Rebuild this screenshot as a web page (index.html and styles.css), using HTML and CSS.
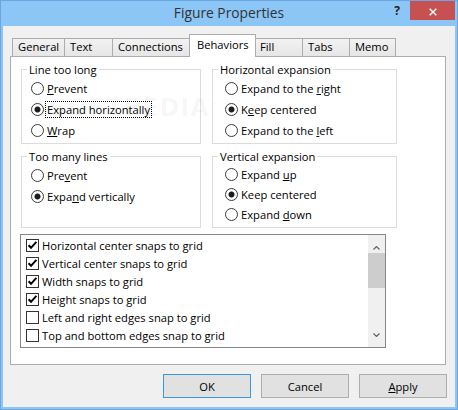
FILE: index.html
```html
<!DOCTYPE html>
<html lang="en">
<head>
<meta charset="utf-8">
<title>Figure Properties</title>
<link rel="stylesheet" href="styles.css">
</head>
<body>
<div class="window">
  <header class="titlebar">
    <div class="title">Figure Properties</div>
    <div class="caption-buttons">
      <div class="caption-btn help">?</div>
      <div class="caption-btn close"><svg width="8" height="8" viewBox="0 0 8 8"><path d="M0.7 0.7 L7.3 7.3 M7.3 0.7 L0.7 7.3" stroke="#fff" stroke-width="1.4" fill="none"/></svg></div>
    </div>
  </header>
  <main class="client">
    <nav class="tabs">
      <div class="tab tab-general">General</div>
      <div class="tab tab-text">Text</div>
      <div class="tab tab-connections">Connections</div>
      <div class="tab tab-behaviors active">Behaviors</div>
      <div class="tab tab-fill">Fill</div>
      <div class="tab tab-tabs">Tabs</div>
      <div class="tab tab-memo">Memo</div>
    </nav>
    <section class="panel">
      <div class="watermark">SOFTPEDIA<sup>®</sup></div>
      <div class="groups">
        <fieldset class="group group-left">
          <legend>Line too long</legend>
          <div class="options">
            <div class="option"><span class="radio"></span><span class="label"><u>P</u>revent</span></div>
            <div class="option"><span class="radio checked"></span><span class="label focus">Expand horizontally</span></div>
            <div class="option"><span class="radio"></span><span class="label"><u>W</u>rap</span></div>
          </div>
        </fieldset>
        <fieldset class="group group-right">
          <legend>Horizontal expansion</legend>
          <div class="options">
            <div class="option"><span class="radio"></span><span class="label">Expand to the <u>r</u>ight</span></div>
            <div class="option"><span class="radio checked"></span><span class="label">K<u>e</u>ep centered</span></div>
            <div class="option"><span class="radio"></span><span class="label">Expand to the <u>l</u>eft</span></div>
          </div>
        </fieldset>
        <fieldset class="group group-left">
          <legend>Too many lines</legend>
          <div class="options">
            <div class="option"><span class="radio"></span><span class="label">Pre<u>v</u>ent</span></div>
            <div class="option"><span class="radio checked"></span><span class="label">Expa<u>n</u>d vertically</span></div>
          </div>
        </fieldset>
        <fieldset class="group group-right">
          <legend>Vertical expansion</legend>
          <div class="options options-tight">
            <div class="option"><span class="radio"></span><span class="label">Expand <u>u</u>p</span></div>
            <div class="option"><span class="radio checked"></span><span class="label">Keep centered</span></div>
            <div class="option"><span class="radio"></span><span class="label">Expand <u>d</u>own</span></div>
          </div>
        </fieldset>
      </div>
      <div class="listbox">
        <div class="items">
          <div class="item"><svg class="cb" width="13" height="13" viewBox="0 0 13 13"><rect x="0.5" y="0.5" width="12" height="12" fill="#fff" stroke="#333"/><path d="M2.6 6.2 L5 8.8 L10.4 2.8" fill="none" stroke="#000" stroke-width="2"/></svg><span>Horizontal center snaps to grid</span></div>
          <div class="item"><svg class="cb" width="13" height="13" viewBox="0 0 13 13"><rect x="0.5" y="0.5" width="12" height="12" fill="#fff" stroke="#333"/><path d="M2.6 6.2 L5 8.8 L10.4 2.8" fill="none" stroke="#000" stroke-width="2"/></svg><span>Vertical center snaps to grid</span></div>
          <div class="item"><svg class="cb" width="13" height="13" viewBox="0 0 13 13"><rect x="0.5" y="0.5" width="12" height="12" fill="#fff" stroke="#333"/><path d="M2.6 6.2 L5 8.8 L10.4 2.8" fill="none" stroke="#000" stroke-width="2"/></svg><span>Width snaps to grid</span></div>
          <div class="item"><svg class="cb" width="13" height="13" viewBox="0 0 13 13"><rect x="0.5" y="0.5" width="12" height="12" fill="#fff" stroke="#333"/><path d="M2.6 6.2 L5 8.8 L10.4 2.8" fill="none" stroke="#000" stroke-width="2"/></svg><span>Height snaps to grid</span></div>
          <div class="item"><svg class="cb" width="13" height="13" viewBox="0 0 13 13"><rect x="0.5" y="0.5" width="12" height="12" fill="#fff" stroke="#333"/></svg><span>Left and right edges snap to grid</span></div>
          <div class="item"><svg class="cb" width="13" height="13" viewBox="0 0 13 13"><rect x="0.5" y="0.5" width="12" height="12" fill="#fff" stroke="#333"/></svg><span>Top and bottom edges snap to grid</span></div>
        </div>
        <div class="scrollbar">
          <div class="sb-btn sb-up"><svg width="7" height="4" viewBox="0 0 7 4"><path d="M0.5 3.5 L3.5 0.6 L6.5 3.5" fill="none" stroke="#606060" stroke-width="1.2"/></svg></div>
          <div class="sb-thumb"></div>
          <div class="sb-track"></div>
          <div class="sb-btn sb-down"><svg width="7" height="4" viewBox="0 0 7 4"><path d="M0.5 0.5 L3.5 3.4 L6.5 0.5" fill="none" stroke="#606060" stroke-width="1.2"/></svg></div>
        </div>
      </div>
    </section>
    <footer class="buttons">
      <button class="btn btn-default">OK</button>
      <button class="btn">Cancel</button>
      <button class="btn"><u>A</u>pply</button>
    </footer>
  </main>
</div>
</body>
</html>
```

FILE: styles.css
```css
* { box-sizing: border-box; }
html, body { margin: 0; padding: 0; }
body {
  width: 458px;
  height: 410px;
  overflow: hidden;
  font-family: "Open Sans", "Noto Sans", sans-serif;
  font-size: 11.2px;
  color: #000;
}
.window {
  width: 458px;
  height: 410px;
  background: #8bc6f6;
  border: 1px solid #68a8e2;
  padding: 0 2px 2px;
  display: flex;
  flex-direction: column;
}
.titlebar {
  height: 25px;
  flex: none;
  display: grid;
  grid-template-columns: 1fr auto 1fr;
  align-items: start;
}
.title {
  grid-column: 2;
  font-size: 13.8px;
  line-height: 23px;
  color: #333;
}
.caption-buttons {
  grid-column: 3;
  justify-self: end;
  display: flex;
}
.caption-btn {
  height: 19px;
  display: flex;
  align-items: center;
  justify-content: center;
}
.help {
  width: 26px;
  font-weight: 700;
  font-size: 12px;
  color: #222;
}
.close {
  width: 45px;
  background: #c75050;
}
.close svg { margin-top: 2px; }

.client {
  flex: 1;
  background: #f0f0f0;
  display: flex;
  flex-direction: column;
}
.tabs {
  height: 30px;
  flex: none;
  display: flex;
  align-items: flex-end;
  padding-left: 9px;
}
.tab {
  height: 18px;
  border: 1px solid #acacac;
  border-right: none;
  border-bottom: none;
  background: linear-gradient(#f2f2f2, #e6e6e6);
  padding-left: 5px;
  line-height: 16px;
  white-space: nowrap;
  flex: none;
}
.tab-general { width: 52px; }
.tab-text { width: 48px; }
.tab-connections { width: 79px; }
.tab-fill { width: 48px; }
.tab-tabs { width: 47px; }
.tab-memo { width: 47px; border-right: 1px solid #acacac; }
.tab.active {
  width: 67px;
  height: 23px;
  margin: 0 -2px -1px;
  background: #fff;
  border-right: 1px solid #acacac;
  padding-left: 7px;
  line-height: 20px;
  z-index: 1;
}

.panel {
  position: relative;
  flex: none;
  margin-left: 7px;
  width: 436px;
  height: 309px;
  background: #fff;
  border: 1px solid #acacac;
  padding: 5px 0 0 10px;
}
.watermark {
  position: absolute;
  left: 38px;
  top: 40px;
  font-family: "DejaVu Sans", sans-serif;
  font-weight: 700;
  font-size: 24px;
  line-height: 22px;
  letter-spacing: 1px;
  color: rgba(0, 0, 0, 0.045);
  pointer-events: none;
}
.watermark sup { font-size: 9px; line-height: 0; }
.groups {
  display: grid;
  grid-template-columns: 180px 185px;
  grid-template-rows: 82px 79px;
  column-gap: 11px;
  row-gap: 5px;
}
.group {
  margin: 0;
  padding: 0;
  min-width: 0;
  border: 1px solid #dcdcdc;
}
.group legend {
  margin-left: 5px;
  padding: 0 2px;
  line-height: 15px;
}
.options { padding-top: 1px; }
.group-left .options { padding-left: 9px; }
.group-right .options { padding-left: 12px; }
.option {
  display: flex;
  align-items: center;
  height: 21px;
  white-space: nowrap;
}
.options-tight { padding-top: 0; }
.options-tight .option { height: 20px; }
.radio {
  flex: none;
  width: 13px;
  height: 13px;
  border: 1px solid #3a3a3a;
  border-radius: 50%;
  background: #fff;
  margin-right: 1px;
}
.radio.checked {
  background: radial-gradient(circle, #1c1c1c 0 2.6px, #fff 3.4px);
}
.label {
  border: 1px dotted transparent;
  padding: 0 1px;
  line-height: 15px;
}
.label.focus { border-color: #000; }

.listbox {
  display: flex;
  width: 366px;
  height: 114px;
  margin: 6px 0 0 -1px;
  border: 1px solid #828790;
  background: #fff;
}
.items {
  flex: 1;
  padding: 1px 0 0 5px;
  overflow: hidden;
}
.item {
  display: flex;
  align-items: center;
  gap: 3px;
  height: 18px;
  white-space: nowrap;
}
.cb { flex: none; display: block; }
.scrollbar {
  flex: none;
  width: 17px;
  display: flex;
  flex-direction: column;
  background: #f0f0f0;
}
.sb-btn {
  flex: none;
  display: flex;
  justify-content: center;
}
.sb-btn svg { display: block; }
.sb-up { height: 18px; align-items: flex-end; padding-bottom: 3px; }
.sb-thumb { height: 35px; flex: none; background: #cdcdcd; }
.sb-track { flex: 1; }
.sb-down { height: 17px; align-items: flex-start; padding-top: 3px; }

.buttons {
  display: flex;
  justify-content: flex-end;
  gap: 10px;
  padding: 9px 8px 0 0;
}
.btn {
  width: 88px;
  height: 24px;
  padding: 0;
  background: #e1e1e1;
  border: 1px solid #adadad;
  font-family: inherit;
  font-size: inherit;
  color: #000;
}
.btn-default { border-color: #3c98e6; }
```
